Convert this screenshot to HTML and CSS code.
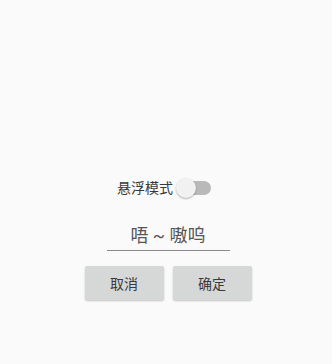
FILE: index.html
```html
<!DOCTYPE html>
<html lang="zh">
  <head>
    <meta charset="UTF-8" />
    <meta name="viewport" content="width=device-width, initial-scale=1.0" />
    <title>悬浮模式</title>
    <link rel="stylesheet" href="styles.css">
  </head>
  <body>
    <div class="panel">
      <div class="mode-row">
        <span class="mode-label">悬浮模式</span>
        <span class="switch"><span class="thumb"></span></span>
      </div>
      <div class="edit-text">唔 ~ 嗷呜</div>
      <div class="buttons">
        <button class="btn">取消</button>
        <button class="btn">确定</button>
      </div>
    </div>
  </body>
</html>
```

FILE: styles.css
```css
body {
  margin: 0;
  padding: 0;
  min-height: 100vh;
  background-color: #fafafa;
  font-family: Roboto, "Noto Sans CJK SC", sans-serif;
  color: #333;
}

.panel {
  display: flex;
  flex-direction: column;
  align-items: center;
  padding-top: 176px;
  padding-left: 4px;
}

.mode-row {
  display: flex;
  align-items: center;
  height: 24px;
  margin-right: 8px;
}
.mode-label {
  font-size: 14px;
  line-height: 24px;
  color: #3a3a3a;
}
.switch {
  position: relative;
  width: 34px;
  height: 14px;
  margin-left: 4px;
  border-radius: 7px;
  background-color: #b9b9b9;
}
.thumb {
  position: absolute;
  left: -1px;
  top: -3px;
  width: 20px;
  height: 20px;
  border-radius: 50%;
  background-color: #f1f1f1;
  box-shadow: 0 1px 2px rgba(0, 0, 0, 0.3);
}

.edit-text {
  width: 123px;
  margin-top: 24px;
  height: 26px;
  line-height: 24px;
  font-size: 18px;
  text-align: center;
  color: #555;
  border-bottom: 1.5px solid #8a8a8a;
}

.buttons {
  display: flex;
  gap: 9px;
  margin-top: 15px;
}
.btn {
  width: 79px;
  height: 34px;
  border: none;
  border-radius: 2px;
  background-color: #d6d7d7;
  font-family: Roboto, "Noto Sans CJK SC", sans-serif;
  font-size: 14px;
  color: #3a3a3a;
  box-shadow: 0 1px 2px rgba(0, 0, 0, 0.22);
}
```
